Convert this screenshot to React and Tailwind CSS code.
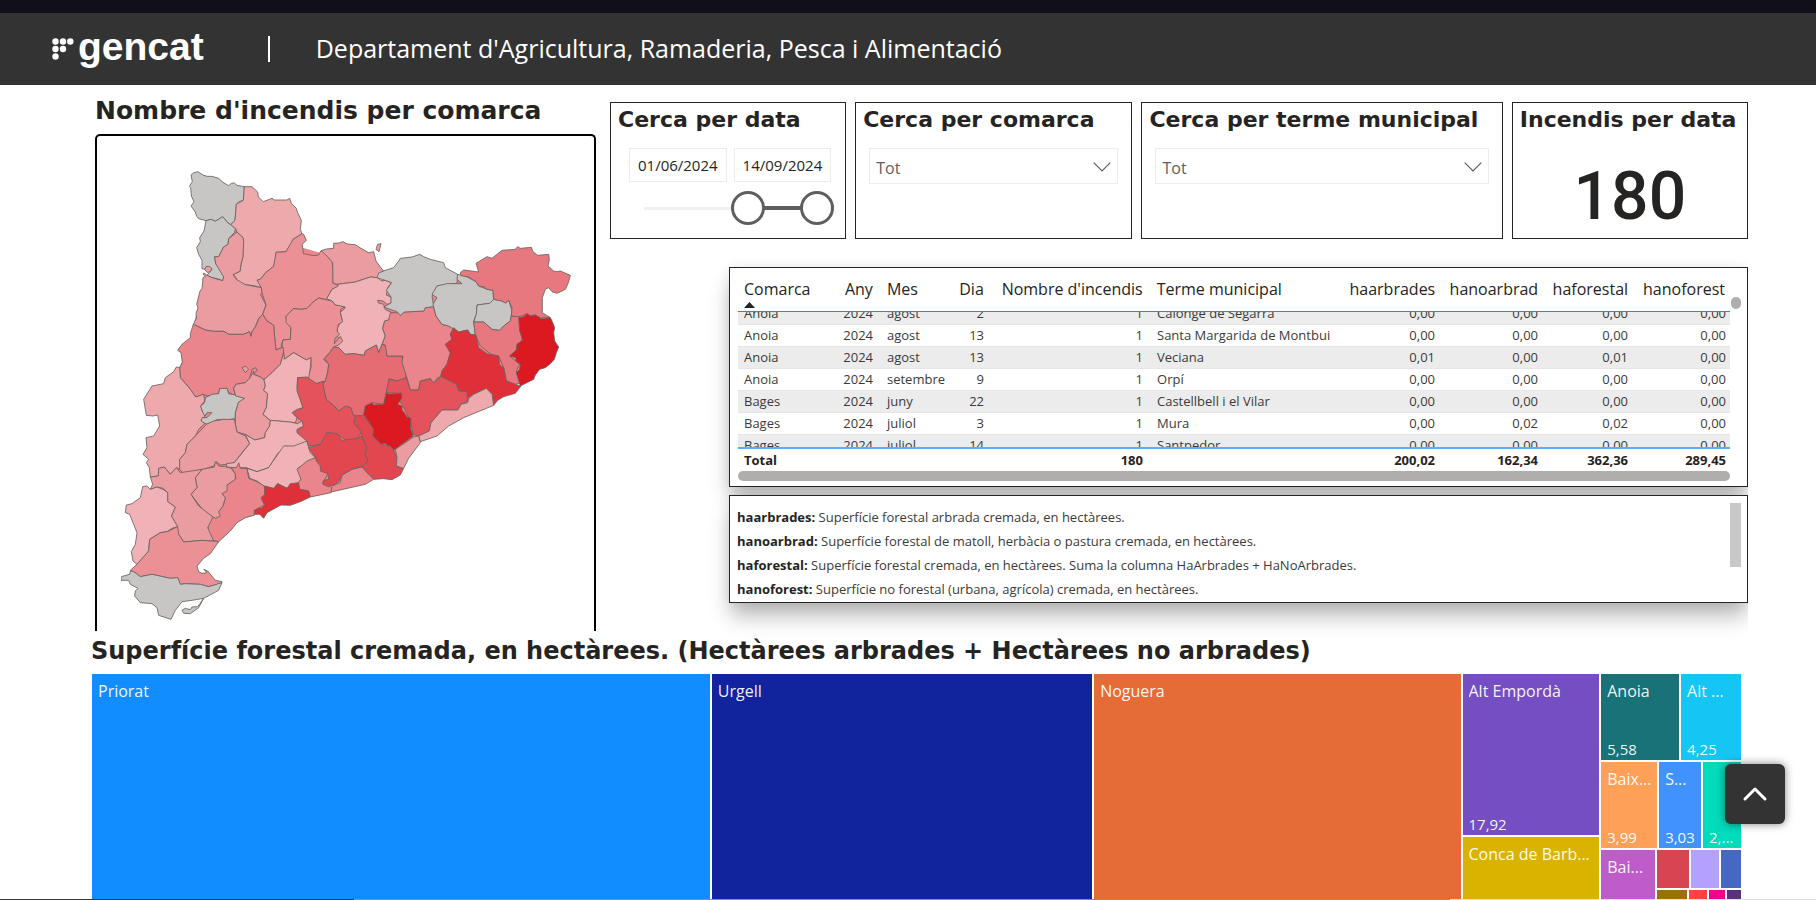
import { ChevronUp } from "lucide-react";

const REGIONS = [
  ["#c8c6c4", "302,72 309,66 323,62 338,72 350,76 365,76 385,82 398,94 415,104 423,97 432,96 440,103 462,107 459,148 445,152 438,160 434,208 421,221 413,216 397,197 375,211 363,205 347,209 325,203 319,196 315,183 302,165 311,152 303,135 301,110 297,106 306,92"],
  ["#c8c6c4", "347,209 363,205 375,211 397,197 413,216 421,221 436,233 432,245 415,263 413,280 400,288 385,317 373,317 376,338 398,366 400,378 397,389 380,383 365,380 350,373 365,355 350,346 343,355 335,353 335,328 325,310 319,290 330,272 328,260 341,240"],
  ["#eb9ca0", "343,355 347,347 358,346 365,354 358,363 350,364"],
  ["#eea9ac", "462,107 485,107 502,123 504,138 519,152 545,142 552,147 590,147 598,142 603,157 618,172 622,185 633,208 630,235 635,248 608,265 604,278 587,302 557,304 556,320 550,346 527,364 510,385 500,388 513,400 513,410 490,404 465,401 440,390 436,378 428,371 449,361 452,340 458,317 458,260 440,243 436,233 421,221 434,208 438,160 459,148"],
  ["#eb9ca0", "440,243 458,260 460,270 458,317 452,340 449,361 428,371 438,385 465,401 513,410 515,425 510,430 518,445 527,462 517,490 505,503 495,528 485,542 482,556 477,542 460,550 415,550 400,541 370,541 345,537 309,520 319,500 317,487 323,470 319,460 329,420 335,412 338,380 346,375 338,370 341,366 350,373 365,380 397,389 400,378 376,338 373,317 385,317 400,288 413,280 415,263"],
  ["#eb9095", "635,248 640,250 648,268 636,280 639,308 670,314 685,312 692,299 700,303 725,330 728,355 728,396 744,403 740,412 725,415 710,443 725,450 685,441 672,450 650,472 635,475 610,473 587,495 590,515 602,530 600,565 578,567 572,585 580,587 557,597 553,560 550,523 530,510 517,490 527,462 515,425 513,410 500,388 510,385 527,364 550,346 557,304 587,302 608,265"],
  ["#eb9ca0", "692,299 708,294 730,292 730,277 745,276 758,272 770,279 795,281 812,292 835,305 850,302 857,330 870,348 880,360 860,380 840,378 795,393 740,400 728,397 727,335 710,315"],
  ["#eb9ca0", "872,278 866,302 857,295 862,280"],
  ["#f0b2b6", "740,400 795,393 840,378 860,380 875,390 885,388 904,395 892,410 888,432 902,438 903,456 890,460 878,450 862,448 864,456 880,460 885,476 905,485 895,507 883,510 877,532 885,555 875,580 865,605 858,582 825,600 822,613 790,608 765,610 745,590 730,588 755,570 740,555 742,530 755,505 750,485 765,470 735,462 725,450 709,443 725,415 744,405"],
  ["#eb9095", "725,450 735,462 763,467 750,476 751,490 757,512 744,520 740,540 748,550 734,562 732,578 750,556 757,570 745,582 730,588 718,605 700,625 715,640 712,665 705,690 678,698 650,680 662,650 662,620 648,627 610,605 582,625 578,600 575,580 578,567 600,565 602,530 587,515 587,495 610,473 635,475 650,472 672,450 685,441"],
  ["#e9858b", "517,490 530,510 550,523 553,560 557,597 578,588 580,605 570,640 545,665 521,686 510,678 490,670 500,658 496,650 485,655 478,682 465,695 437,700 430,712 436,735 415,725 410,712 388,713 385,728 350,735 340,730 316,738 300,715 270,680 268,650 276,635 272,605 262,598 275,580 300,560 300,548 309,520 345,537 370,541 400,541 415,550 460,550 477,542 482,556 485,542 495,528 505,503"],
  ["#eb9ca0", "455,650 465,645 475,655 465,665"],
  ["#eea9ac", "268,650 270,680 300,715 316,738 340,730 343,750 331,765 337,783 348,790 333,808 343,818 325,835 315,855 290,880 285,905 268,925 270,955 258,950 240,970 222,948 205,952 204,975 180,978 177,950 168,935 175,925 158,910 170,890 167,860 190,855 208,825 202,792 188,795 168,793 160,745 185,705 220,698 225,680 250,662 258,648"],
  ["#c8c6c4", "345,740 365,730 385,728 388,713 410,712 415,728 435,732 463,742 460,750 445,753 435,785 435,805 428,803 415,807 400,805 380,806 360,816 348,819 333,811 335,800 350,800 365,785 350,785 343,795 337,783 331,765 343,755"],
  ["#eb9ca0", "521,686 525,705 520,718 532,728 528,770 518,790 540,808 538,825 525,845 523,860 493,867 465,850 440,843 435,820 435,785 445,753 463,742 436,735 430,712 437,700 465,695 478,682 490,660 490,670 510,678"],
  ["#f0b2b6", "582,625 610,605 648,627 662,620 660,650 655,680 622,680 620,710 638,770 618,776 606,785 620,800 615,815 540,808 518,790 528,770 532,728 520,718 525,705 521,686 545,665 570,640 580,605"],
  ["#eb9ca0", "348,820 370,810 400,805 432,805 440,843 465,855 478,878 455,905 432,935 410,940 390,942 378,932 370,945 340,955 280,968 268,955 268,925 285,905 290,880 315,855"],
  ["#f0b2b6", "540,808 600,813 622,818 635,810 640,825 620,835 620,845 650,862 650,870 640,878 610,888 585,885 580,892 560,910 545,935 535,950 500,962 468,950 430,950 410,948 408,938 432,935 478,878 465,850 493,867 523,860 525,845 538,825"],
  ["#f0b2b6", "650,870 655,890 660,905 675,920 650,935 622,952 630,968 632,990 620,1000 600,1005 590,1012 562,998 550,1013 520,1005 500,990 478,982 470,952 500,962 535,950 545,935 580,885 610,885"],
  ["#e4535b", "622,680 650,678 678,698 700,690 698,700 708,745 732,765 745,780 765,765 782,770 788,790 797,795 790,815 813,842 805,860 770,870 740,850 710,845 700,870 690,880 655,885 650,870 625,850 620,840 640,825 635,810 620,800 606,785 638,770 620,720"],
  ["#e66c74", "730,588 745,590 765,610 790,608 822,613 825,600 858,582 865,605 875,580 888,583 890,615 935,615 938,640 948,670 945,682 920,690 898,683 892,710 888,725 880,760 845,755 825,765 820,795 797,795 788,790 782,770 765,765 745,780 732,765 708,745 698,700 705,690 712,665 715,640 702,623 718,605"],
  ["#e9858b", "900,485 925,485 930,493 942,483 1000,480 1005,470 1030,467 1037,495 1055,520 1075,525 1090,530 1080,550 1085,565 1065,580 1080,605 1070,640 1055,660 1050,677 1040,682 1030,697 1020,682 990,690 985,717 960,717 948,675 935,635 938,615 890,615 885,582 875,580 885,555 877,532 883,510 895,507"],
  ["#c8c6c4", "860,380 865,366 885,358 910,350 925,330 930,322 965,318 988,310 1000,317 1020,325 1060,335 1065,350 1102,370 1100,397 1040,405 1025,435 1030,467 1005,470 1000,480 942,483 930,493 920,482 880,468 902,456 902,438 888,418 904,395 885,388"],
  ["#c8c6c4", "1102,370 1125,375 1157,392 1165,405 1190,415 1208,418 1210,445 1198,457 1160,462 1158,490 1150,510 1155,552 1140,550 1132,537 1105,543 1075,525 1055,520 1037,495 1028,460 1040,440 1025,430 1040,405 1070,398 1115,398 1100,385"],
  ["#c8c6c4", "1210,445 1235,450 1245,456 1255,448 1265,480 1260,510 1240,525 1228,538 1205,535 1180,513 1150,513 1158,490 1160,462 1198,457"],
  ["#e8787f", "1110,365 1120,357 1165,363 1157,337 1190,317 1205,322 1235,298 1275,295 1282,287 1290,292 1323,289 1328,302 1342,313 1375,310 1377,325 1373,345 1390,360 1400,362 1410,360 1440,373 1434,395 1425,415 1415,420 1400,427 1385,422 1375,410 1365,415 1356,440 1356,485 1380,500 1350,500 1335,492 1320,495 1310,488 1285,498 1263,495 1265,470 1255,448 1245,456 1235,450 1210,445 1208,418 1190,415 1182,408 1165,405 1157,392 1135,378 1112,374"],
  ["#e8787f", "1150,513 1180,513 1205,535 1228,538 1240,525 1260,510 1263,495 1288,498 1295,540 1295,570 1280,580 1278,597 1258,615 1288,640 1278,660 1288,697 1275,700 1248,690 1240,650 1225,615 1205,612 1170,585 1155,552"],
  ["#dc1821", "1285,500 1300,497 1310,488 1320,495 1335,492 1352,503 1380,500 1386,512 1393,530 1390,545 1393,570 1405,588 1398,605 1392,625 1380,638 1365,650 1348,655 1335,672 1330,685 1290,705 1278,665 1288,655 1290,640 1276,630 1277,620 1258,615 1278,597 1280,580 1297,567 1288,540"],
  ["#e02f38", "1090,530 1105,543 1132,537 1140,550 1157,552 1165,590 1190,608 1225,615 1228,642 1240,650 1248,690 1275,700 1292,705 1275,727 1240,737 1222,748 1210,763 1207,750 1205,730 1188,712 1150,730 1132,740 1130,722 1105,720 1098,700 1052,677 1055,660 1070,640 1080,605 1065,580 1085,565 1080,550"],
  ["#e4535b", "1052,677 1098,700 1105,720 1130,722 1132,750 1112,760 1103,777 1055,777 1022,815 1017,840 985,855 968,850 960,810 935,760 922,745 935,727 888,725 895,685 920,690 948,680 960,717 985,717 990,690 1020,685 1030,695"],
  ["#dc1821", "888,725 895,729 933,727 935,740 922,760 935,765 935,778 942,785 950,798 962,802 960,830 968,855 910,898 900,885 890,882 885,877 872,880 847,855 850,835 820,790 825,765 845,755 850,762 880,760"],
  ["#eea9ac", "1112,760 1132,755 1135,742 1150,730 1188,712 1205,730 1210,763 1120,800 1075,825 1040,855 990,872 985,855 1017,840 1022,815 1055,777 1103,777"],
  ["#e2474f", "795,795 820,793 850,835 847,855 872,880 900,885 910,898 920,920 918,945 940,952 930,972 905,986 880,983 850,985 830,965 815,948 833,930 823,910 830,890 813,855 813,842 790,815"],
  ["#eb9ca0", "970,858 985,855 990,875 955,922 940,952 918,945 920,920 915,895"],
  ["#e9858b", "675,920 692,930 692,955 715,965 697,995 725,1010 722,1025 660,1038 655,1020 628,1015 620,998 632,985 620,955 650,930"],
  ["#e9858b", "722,1023 725,1005 750,995 755,972 785,955 815,948 830,965 850,985 825,1000 780,1010"],
  ["#e2474f", "655,890 690,880 710,845 740,847 755,868 805,862 813,855 830,890 823,910 833,930 815,948 800,950 785,955 755,972 745,992 735,1000 715,1007 697,1000 700,988 715,985 712,968 690,960 690,945 678,930 675,918"],
  ["#e02f38", "523,1005 550,1012 562,998 590,1012 600,998 625,995 628,1015 655,1020 660,1038 630,1052 600,1063 572,1062 530,1085 520,1102 508,1090 490,1090 488,1078 505,1065 512,1072 522,1062 512,1040 523,1030"],
  ["#e9858b", "423,952 440,948 445,935 450,952 470,952 475,982 500,992 522,1005 523,1030 512,1040 522,1062 492,1078 492,1093 465,1100 440,1115 420,1140 385,1172 368,1168 352,1140 355,1110 370,1098 385,1080 398,1065 405,1040 395,1028 410,1002 437,982 433,965"],
  ["#eb9ca0", "335,955 372,948 375,932 385,945 405,947 423,952 435,970 435,985 410,1002 410,1020 395,1028 405,1040 398,1065 385,1082 390,1095 375,1102 368,1098 340,1080 302,1030 320,1010 315,980"],
  ["#eb9ca0", "180,978 204,975 205,952 222,948 240,970 258,950 270,965 335,955 315,980 320,1010 302,1030 325,1065 368,1098 352,1130 370,1170 335,1168 280,1173 262,1145 260,1125 243,1095 255,1068 232,1052 232,1025 218,1012 200,1008 180,1015 187,1000"],
  ["#f0b2b6", "157,1007 170,1005 180,1015 200,1008 218,1015 232,1025 232,1052 255,1068 243,1095 262,1127 245,1132 230,1142 210,1145 178,1165 175,1200 140,1240 128,1230 123,1202 135,1180 140,1145 130,1120 118,1090 105,1085 108,1062 125,1058 150,1040"],
  ["#eb9095", "262,1127 265,1150 280,1173 335,1168 385,1172 360,1208 340,1222 320,1245 325,1262 335,1267 350,1265 340,1255 352,1260 375,1288 395,1292 393,1297 355,1307 330,1300 285,1298 270,1300 262,1280 240,1282 185,1270 150,1277 130,1262 120,1258 140,1240 175,1200 178,1165 210,1145 230,1142"],
  ["#c8c6c4", "130,1262 150,1277 185,1270 240,1282 262,1280 270,1300 285,1298 330,1300 355,1307 395,1295 385,1318 340,1342 305,1348 275,1352 255,1378 242,1405 205,1393 200,1370 185,1358 150,1355 133,1335 135,1320 143,1312 120,1300 115,1288 92,1288 93,1277 118,1270 120,1260"],
  ["#c8c6c4", "340,1342 325,1370 300,1388 280,1387 275,1378 285,1372 300,1376 305,1368 322,1367"],
];

const LAND =
  "340,400 450,200 600,280 740,320 860,390 1000,350 1100,380 1200,360 1280,330 1350,450 1350,620 1200,720 1000,835 900,950 700,1010 500,1060 380,1130 330,1200 200,1255 160,1100 195,1020 215,950 235,825 220,750 290,600";

const COLS =
  "grid grid-cols-[99fr_44fr_72fr_39fr_159fr_193fr_99fr_103fr_90fr_94fr]";
const LEFT_COLS = [0, 2, 5];
const HEADERS = ["Comarca", "Any", "Mes", "Dia", "Nombre d'incendis", "Terme municipal", "haarbrades", "hanoarbrad", "haforestal", "hanoforest"];
const ROWS = [
  ["Anoia", "2024", "agost", "2", "1", "Calonge de Segarra", "0,00", "0,00", "0,00", "0,00"],
  ["Anoia", "2024", "agost", "13", "1", "Santa Margarida de Montbui", "0,00", "0,00", "0,00", "0,00"],
  ["Anoia", "2024", "agost", "13", "1", "Veciana", "0,01", "0,00", "0,01", "0,00"],
  ["Anoia", "2024", "setembre", "9", "1", "Orpí", "0,00", "0,00", "0,00", "0,00"],
  ["Bages", "2024", "juny", "22", "1", "Castellbell i el Vilar", "0,00", "0,00", "0,00", "0,00"],
  ["Bages", "2024", "juliol", "3", "1", "Mura", "0,00", "0,02", "0,02", "0,00"],
  ["Bages", "2024", "juliol", "14", "1", "Santpedor", "0,00", "0,00", "0,00", "0,00"],
];
const TOTALS = ["Total", "", "", "", "180", "", "200,02", "162,34", "362,36", "289,45"];
const NOTES = [
  ["haarbrades:", "Superfície forestal arbrada cremada, en hectàrees."],
  ["hanoarbrad:", "Superfície forestal de matoll, herbàcia o pastura cremada, en hectàrees."],
  ["haforestal:", "Superfície forestal cremada, en hectàrees. Suma la columna HaArbrades + HaNoArbrades."],
  ["hanoforest:", "Superfície no forestal (urbana, agrícola) cremada, en hectàrees."],
];

const HEAVY = "font-['DejaVu_Sans',sans-serif] font-bold text-[#252423] whitespace-nowrap";

function align(i) {
  return LEFT_COLS.includes(i) ? "text-left" : "text-right";
}

function Header() {
  return (
    <header>
      <div className="h-[13px] bg-[#110f1a]" />
      <div className="flex h-[72px] items-center bg-[#333333] pl-[52px] text-white">
        <a href="#inici" className="flex items-center gap-1">
          <svg width="22" height="24" viewBox="0 0 22 24" fill="currentColor" aria-hidden="true">
            <circle cx="3.5" cy="4.5" r="3.2" />
            <circle cx="11" cy="4.5" r="3.2" />
            <circle cx="18.3" cy="4.5" r="3.2" />
            <circle cx="3.5" cy="12" r="3.2" />
            <circle cx="11" cy="12" r="3.2" />
            <circle cx="3.5" cy="19.5" r="3.2" />
          </svg>
          <span className="pb-1 font-['Liberation_Sans',sans-serif] text-[39px] leading-[56px] font-bold">gencat</span>
        </a>
        <span className="ml-[64px] h-[26px] w-[2px] bg-white" />
        <p className="ml-[46px] text-[25px] whitespace-nowrap">
          Departament d'Agricultura, Ramaderia, Pesca i Alimentació
        </p>
      </div>
    </header>
  );
}

function FireMap() {
  return (
    <section className="min-w-0">
      <h2 className={`${HEAVY} h-[49px] text-[25px] leading-[52px]`}>Nombre d'incendis per comarca</h2>
      <div className="h-[497px] overflow-hidden rounded-t-[5px] border-2 border-b-0 border-black pt-[35px] pl-6">
        <svg width="451" height="450" viewBox="92 60 1353 1350" role="img" aria-label="Mapa d'incendis per comarca">
          <polygon fill="#e9858b" points={LAND} />
          <g stroke="#6b6360" strokeOpacity="0.85" strokeWidth="3" strokeLinejoin="round">
            {REGIONS.map(([fill, points], i) => (
              <polygon key={i} fill={fill} points={points} />
            ))}
          </g>
        </svg>
      </div>
    </section>
  );
}

const PANEL = "min-w-0 border border-[#252423] bg-white";
const PANEL_TITLE = `${HEAVY} block pl-[7px] text-[22px] leading-[34px]`;
const THUMB =
  "pointer-events-none absolute inset-0 m-0 h-[34px] w-full appearance-none bg-transparent [&::-webkit-slider-thumb]:pointer-events-auto [&::-webkit-slider-thumb]:h-[34px] [&::-webkit-slider-thumb]:w-[34px] [&::-webkit-slider-thumb]:appearance-none [&::-webkit-slider-thumb]:rounded-full [&::-webkit-slider-thumb]:border-[3px] [&::-webkit-slider-thumb]:border-[#605e5c] [&::-webkit-slider-thumb]:bg-white";
const DATE_INPUT =
  "h-[34px] min-w-0 flex-1 border border-[#ededed] bg-white text-center text-[15px] text-[#252423]";

function SelectPanel({ id, title }) {
  return (
    <div className={PANEL}>
      <label htmlFor={id} className={PANEL_TITLE}>{title}</label>
      <div className="relative mx-[13px] mt-[11px]">
        <select id={id} className="h-9 w-full appearance-none border border-[#ededed] bg-white pt-1 pl-[6px] text-base text-[#605e5c]">
          <option>Tot</option>
        </select>
        <svg className="pointer-events-none absolute top-[14px] right-[7px]" width="18" height="10" viewBox="0 0 18 10" fill="none" stroke="#605e5c" strokeWidth="1.2" aria-hidden="true">
          <path d="M0.7 0.7 9 9 17.3 0.7" />
        </svg>
      </div>
    </div>
  );
}

function Filters() {
  return (
    <div className="grid h-[137px] grid-cols-[236fr_277fr_361fr_236fr] gap-[9px]">
      <div className={PANEL}>
        <h2 className={PANEL_TITLE}>Cerca per data</h2>
        <div className="mt-[11px] flex gap-[7px] pr-[14px] pl-[18px]">
          <input className={DATE_INPUT} aria-label="Data inicial" defaultValue="01/06/2024" />
          <input className={DATE_INPUT} aria-label="Data final" defaultValue="14/09/2024" />
        </div>
        <div className="relative mt-[9px] mr-[11px] ml-[17px] flex h-[34px] items-center px-4">
          <div className="h-[3px] w-3/5 bg-[#f0f0f0]" />
          <div className="h-1 flex-1 bg-[#605e5c]" />
          <input className={THUMB} type="range" min="0" max="100" defaultValue="60" aria-label="Inici del període" />
          <input className={THUMB} type="range" min="0" max="100" defaultValue="100" aria-label="Final del període" />
        </div>
      </div>
      <SelectPanel id="comarca" title="Cerca per comarca" />
      <SelectPanel id="municipi" title="Cerca per terme municipal" />
      <div className={PANEL}>
        <h2 className={PANEL_TITLE}>Incendis per data</h2>
        <p className="pt-[20px] text-center font-[Roboto,sans-serif] text-[66px] leading-[80px] font-medium text-[#252423]">180</p>
      </div>
    </div>
  );
}

const SHADOW = "shadow-[0_15px_20px_-2px_rgba(0,0,0,0.28),0_0_12px_rgba(0,0,0,0.08)]";

function FireTable() {
  return (
    <div className={`${PANEL} ${SHADOW} relative h-[220px] pr-[17px] pl-2`}>
      <table className="block w-full">
        <thead className="block h-11 border-b border-[#118dff]">
          <tr className={COLS}>
            {HEADERS.map((h, i) => (
              <th key={h} scope="col" className={`pt-2 pr-2 pl-[6px] text-base leading-[26px] font-normal whitespace-nowrap text-[#252423] last:pr-[5px] ${align(i)}`}>
                {h}
                {i === 0 && (
                  <svg className="block" width="11" height="6" viewBox="0 0 11 6" aria-hidden="true">
                    <path d="M0 6 5.5 0 11 6Z" fill="#252423" />
                  </svg>
                )}
              </th>
            ))}
          </tr>
        </thead>
        <tbody className="block h-[135px] overflow-hidden text-[13px] leading-[21px] text-[#3b3a39]">
          {ROWS.map((row, r) => (
            <tr key={r} className={`${COLS} border-b border-[#e6e6e6] first:-mt-[9px] odd:bg-[#ececec]`}>
              {row.map((cell, i) => (
                <td key={i} className={`pr-2 pl-[6px] whitespace-nowrap last:pr-1 ${align(i)}`}>{cell}</td>
              ))}
            </tr>
          ))}
        </tbody>
        <tfoot className="block border-t-2 border-[#5aaeff] text-[13px] leading-[22px] font-bold text-[#252423]">
          <tr className={COLS}>
            {TOTALS.map((cell, i) => (
              <td key={i} className={`pr-2 pl-[6px] last:pr-1 ${align(i)}`}>{cell}</td>
            ))}
          </tr>
        </tfoot>
      </table>
      <div className="h-[10px] rounded-full bg-[#b0aeac]" />
      <div className="absolute top-[29px] right-[6px] h-3 w-[10px] rounded-full bg-[#b0aeac]" />
    </div>
  );
}

function Notes() {
  return (
    <div className={`${PANEL} ${SHADOW} relative mt-2 h-[108px] px-[7px] pt-[9px] text-[13px] leading-[24px] text-[#3b3a39]`}>
      {NOTES.map(([name, text]) => (
        <p key={name}>
          <b className="text-[#252423]">{name}</b> {text}
        </p>
      ))}
      <div className="absolute top-[7px] right-[6px] h-16 w-[11px] bg-[#c8c8c8]" />
    </div>
  );
}

function Tile({ className, name, value }) {
  return (
    <div className={`flex min-w-0 flex-col justify-between overflow-hidden pt-1 pr-1 pl-[6px] text-white/95 ${className}`}>
      <span className="truncate text-base leading-[26px]">{name}</span>
      {value && <span className="truncate text-[15px] leading-[22px]">{value}</span>}
    </div>
  );
}

function Treemap() {
  return (
    <section>
      <h2 className={`${HEAVY} h-[43px] text-[24px] leading-[41px]`}>
        Superfície forestal cremada, en hectàrees. (Hectàrees arbrades + Hectàrees no arbrades)
      </h2>
      <div className="mr-[7px] ml-px grid h-[226px] grid-cols-[619fr_381fr_367fr_137fr_140fr] gap-[2px]">
        <Tile className="bg-[#118dff]" name="Priorat" />
        <Tile className="bg-[#12239e]" name="Urgell" />
        <Tile className="bg-[#e66c37]" name="Noguera" />
        <div className="grid grid-rows-[161px_1fr] gap-[2px]">
          <Tile className="bg-[#744ec2]" name="Alt Empordà" value="17,92" />
          <Tile className="bg-[#d9b300]" name="Conca de Barb..." />
        </div>
        <div className="grid grid-rows-[86px_86px_1fr] gap-[2px]">
          <div className="grid grid-cols-[78fr_60fr] gap-[2px]">
            <Tile className="bg-[#197278]" name="Anoia" value="5,58" />
            <Tile className="bg-[#15c6f4]" name="Alt ..." value="4,25" />
          </div>
          <div className="grid grid-cols-[56fr_42fr_38fr] gap-[2px]">
            <Tile className="bg-[#ffa058]" name="Baix..." value="3,99" />
            <Tile className="bg-[#4092ff]" name="S..." value="3,03" />
            <Tile className="bg-[#00dbbc]" value="2,..." />
          </div>
          <div className="grid grid-cols-[54fr_84fr] gap-[2px]">
            <Tile className="bg-[#be5dc9]" name="Bai..." />
            <div className="grid grid-rows-[38px_1fr] gap-[2px]">
              <div className="grid grid-cols-[32fr_28fr_20fr] gap-[2px]">
                <div className="bg-[#d64550]" />
                <div className="bg-[#b4a0ff]" />
                <div className="bg-[#4668c5]" />
              </div>
              <div className="grid grid-cols-[31fr_18fr_17fr_14fr] gap-[2px]">
                <div className="bg-[#99700a]" />
                <div className="bg-[#ff4141]" />
                <div className="bg-[#f0008c]" />
                <div className="bg-[#57337f]" />
              </div>
            </div>
          </div>
        </div>
      </div>
    </section>
  );
}

export default function App() {
  return (
    <div className="relative h-screen overflow-hidden bg-white font-['Open_Sans','Noto_Sans',sans-serif]">
      <Header />
      <main className="pr-[68px] pl-[91px]">
        <div className="grid h-[546px] grid-cols-[501fr_1138fr] gap-[14px] overflow-x-clip pl-1">
          <FireMap />
          <div className="min-w-0 pt-[17px]">
            <Filters />
            <div className="mt-[28px] ml-[119px]">
              <FireTable />
              <Notes />
            </div>
          </div>
        </div>
        <Treemap />
      </main>
      <button
        type="button"
        aria-label="Torna a dalt"
        className="fixed right-[31px] bottom-[76px] flex h-[60px] w-[60px] items-center justify-center rounded-md bg-[#333333] text-white shadow-[0_0_8px_rgba(0,0,0,0.5)]"
      >
        <ChevronUp className="h-10 w-10" strokeWidth={1.8} />
      </button>
      <div className="absolute inset-x-0 bottom-0 flex h-px">
        <div className="w-[354px] bg-[#3a3a3e]" />
        <div className="flex-1 bg-[#8a8f99]" />
        <div className="w-[366px] bg-[#e0e0e0]" />
      </div>
    </div>
  );
}
